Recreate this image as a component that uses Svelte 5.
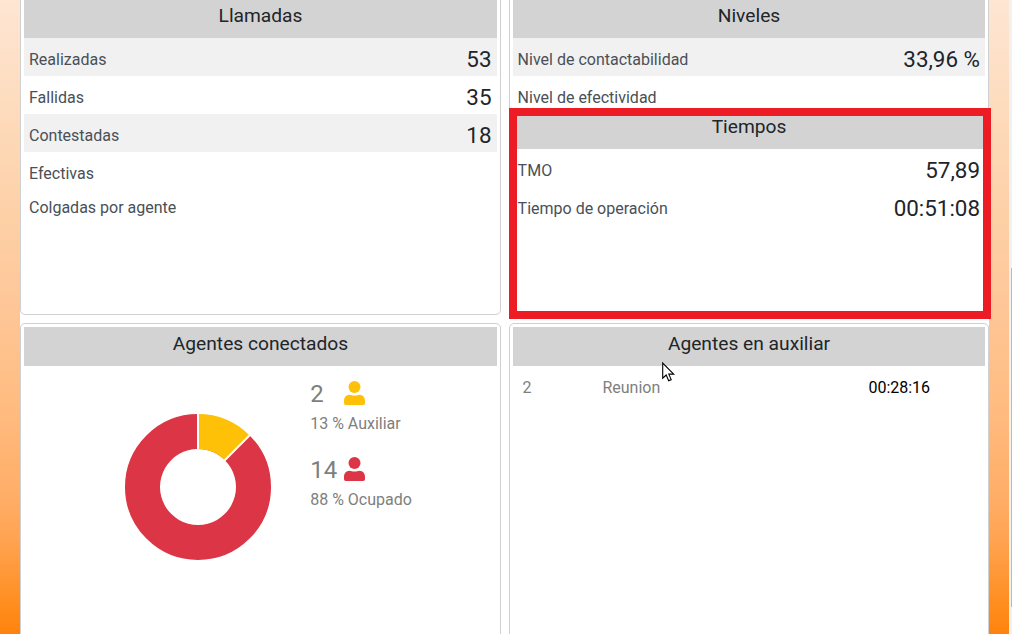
<script>
  const calls = [
    { label: 'Realizadas', value: '53' },
    { label: 'Fallidas', value: '35' },
    { label: 'Contestadas', value: '18' },
    { label: 'Efectivas' },
    { label: 'Colgadas por agente' }
  ];
  const levels = [
    { label: 'Nivel de contactabilidad', value: '33,96 %' },
    { label: 'Nivel de efectividad' }
  ];
  const times = [
    { label: 'TMO', value: '57,89' },
    { label: 'Tiempo de operación', value: '00:51:08' }
  ];
  const agents = [
    { count: 2, text: '13 % Auxiliar', color: '#ffc107' },
    { count: 14, text: '88 % Ocupado', color: '#dc3545' }
  ];
</script>

{#snippet rows(items, striped)}
  <div class="rows" class:striped>
    {#each items as item}
      <div class="row" class:short={!item.value}>
        <span class="label">{item.label}</span>
        {#if item.value}<span class="value">{item.value}</span>{/if}
      </div>
    {/each}
  </div>
{/snippet}

<div class="page">
  <main>
    <section class="card calls">
      <h2>Llamadas</h2>
      {@render rows(calls, true)}
    </section>

    <div class="stack">
      <section class="card levels">
        <h2>Niveles</h2>
        {@render rows(levels, true)}
      </section>
      <section class="card times">
        <h2>Tiempos</h2>
        {@render rows(times, false)}
      </section>
      <div class="highlight"></div>
    </div>

    <section class="card">
      <h2>Agentes conectados</h2>
      <div class="connected">
        <svg class="donut" viewBox="-74 -74 148 148" width="148" height="148">
          <path d="M0-74A74 74 0 1 1-.01-74ZM0-38A38 38 0 1 0 .01-38Z" fill="#dc3545" fill-rule="evenodd" />
          <path d="M0-74A74 74 0 0 1 52.33-52.33L26.870-26.870A38 38 0 0 0 0-38Z" fill="#ffc107" />
          <path d="M0-76V-36M53.7-53.7L25.5-25.5" stroke="#fff" stroke-width="2" />
          <circle r="74" fill="none" stroke="#fff" stroke-width="2" />
        </svg>
        <div class="legend">
          {#each agents as agent}
            <div class="agent">
              <div class="count">
                <span>{agent.count}</span>
                <svg viewBox="0 0 22 24" width="22" height="24" fill={agent.color}>
                  <circle cx="11.500" cy="6" r="6" />
                  <path d="M6.500 13.700C8.500 13.700 9 14.500 11.500 14.500S14.500 13.700 16.500 13.700C19.800 13.700 22 16.500 22 19.800V22.200Q22 24 20.200 24H2.800Q1 24 1 22.200V19.800C1 16.500 3.200 13.700 6.500 13.700Z" />
                </svg>
              </div>
              <div class="share">{agent.text}</div>
            </div>
          {/each}
        </div>
      </div>
    </section>

    <section class="card">
      <h2>Agentes en auxiliar</h2>
      <div class="aux">
        <span>2</span>
        <span>Reunion</span>
        <span class="duration">00:28:16</span>
      </div>
    </section>
  </main>
  <div class="scrollbar"><div class="thumb"></div></div>

  <svg class="cursor" viewBox="0 0 13 20" width="13" height="20">
    <path d="M.7 1V16.200L4.200 13 6.700 18.700 9.200 17.600 6.800 12.100H11.700Z" fill="#fff" stroke="#000" stroke-width="1.100" />
  </svg>
</div>

<style>
  :global(body) {
    margin: 0;
    overflow: hidden;
  }
  .page {
    position: relative;
    display: flex;
    width: 1012px;
    height: 634px;
    overflow: hidden;
    font-family: Roboto, 'Liberation Sans', sans-serif;
    font-size: 16px;
    color: #212529;
    background: linear-gradient(#fee6d3 0, #fdd0a6 220px, #fec799 300px, #ffbd82 400px, #ffad66 500px, #ffa24e 545px, #ff8f22 600px, #ff830c 634px);
  }
  main {
    flex: none;
    display: grid;
    grid-template-columns: 481px 480px;
    grid-template-rows: 320px 330px;
    gap: 8px;
    width: 969px;
    height: 658px;
    margin: -5px 0 0 20px;
    background: #fff;
  }
  .card {
    box-sizing: border-box;
    padding: 3px;
    border: 1px solid #ced0d2;
    border-radius: 5px;
    background: #fff;
  }
  .stack {
    position: relative;
    display: flex;
    flex-direction: column;
  }
  .levels {
    height: 113px;
    overflow: hidden;
    border-bottom: 0;
    border-radius: 5px 5px 0 0;
  }
  .times {
    flex: 1;
    padding-top: 0;
    border-top: 0;
  }
  .times h2 {
    height: 41px;
    line-height: 37px;
  }
  .highlight {
    position: absolute;
    left: 0;
    top: 113px;
    box-sizing: border-box;
    width: 482px;
    height: 211px;
    border: 8px solid #ed1c24;
  }
  h2 {
    height: 39px;
    margin: 0;
    font-size: 19.2px;
    font-weight: 400;
    line-height: 33px;
    text-align: center;
    background: #d3d3d3;
  }
  .row {
    display: flex;
    justify-content: space-between;
    box-sizing: border-box;
    height: 38px;
    padding: 0 5px;
    line-height: 42px;
  }
  .row.short:nth-child(4) {
    height: 34px;
  }
  .striped .row:nth-child(odd):not(.short) {
    background: #f1f1f1;
  }
  .label {
    line-height: 44px;
    color: #495057;
  }
  .stack .label {
    margin-left: -0.4px;
  }
  .value {
    font-size: 22.4px;
  }
  .calls .value {
    margin-right: 0.5px;
  }
  .connected {
    display: flex;
    padding: 13px 0 0 100px;
  }
  .donut {
    margin-top: 34px;
  }
  .legend {
    margin-left: 38.2px;
    color: #7d7f7e;
  }
  .agent {
    height: 76px;
  }
  .count {
    display: flex;
    align-items: center;
    height: 30px;
    font-size: 24px;
  }
  .count span {
    width: 33px;
  }
  .count svg {
    margin-top: -2px;
  }
  .share {
    line-height: 30px;
  }
  .aux {
    display: grid;
    grid-template-columns: 80px 266px 1fr;
    padding: 0 9.4px;
    line-height: 43px;
    color: #7d7f7e;
  }
  .duration {
    color: #000;
  }
  .scrollbar {
    width: 3px;
    margin-left: 20px;
    background: #f1f1f1;
  }
  .thumb {
    width: 1px;
    height: 339px;
    margin: 268px 0 0 2px;
    background: #b9bbbd;
  }
  .cursor {
    position: absolute;
    left: 662px;
    top: 362px;
  }
</style>
